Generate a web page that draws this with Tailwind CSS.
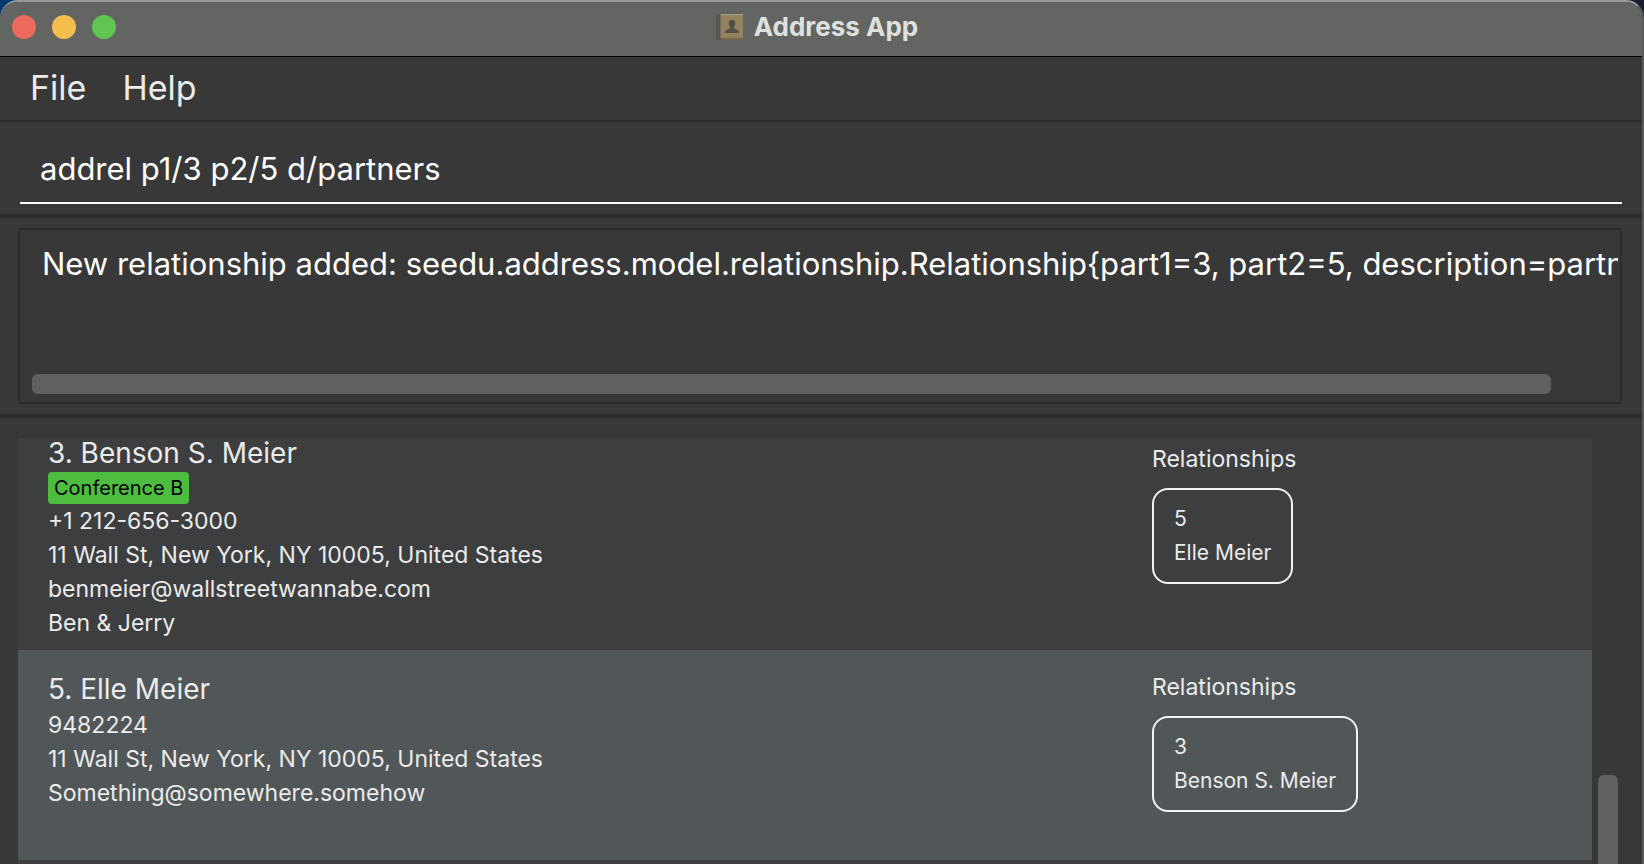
<!DOCTYPE html>
<html lang="en">
<head>
<meta charset="utf-8">
<meta name="viewport" content="width=device-width, initial-scale=1">
<title>Address App</title>
<script src="https://cdn.jsdelivr.net/npm/@tailwindcss/browser@4"></script>
</head>
<body class="h-screen overflow-hidden bg-linear-to-r from-[#003a70] to-[#171c2e] font-['Inter','Liberation_Sans',sans-serif]">
<div class="flex h-full flex-col overflow-hidden rounded-t-[18px] border-t-2 border-r-2 border-t-[#979a98] border-r-[#5a5a5a] bg-[#383838] text-[#ebebeb]">

  <!-- Title bar -->
  <header class="grid h-[55px] shrink-0 grid-cols-[1fr_auto_1fr] items-center border-b border-black bg-[#636563] px-3 pb-1">
    <div class="flex gap-4">
      <button type="button" aria-label="Close" class="size-6 rounded-full bg-[#ed6a5e]"></button>
      <button type="button" aria-label="Minimize" class="size-6 rounded-full bg-[#f5bf4f]"></button>
      <button type="button" aria-label="Zoom" class="size-6 rounded-full bg-[#61c554]"></button>
    </div>
    <div class="flex items-center gap-2.5 pr-2">
      <svg class="size-7" viewBox="0 0 28 28" aria-hidden="true">
        <rect x="0" y="1" width="6" height="26" rx="1.5" fill="#5b564d"/>
        <rect x="4" y="1" width="1" height="25" fill="#736c60"/>
        <rect x="5" y="1" width="22" height="25" rx="1" fill="#93835f"/>
        <rect x="5" y="1" width="22" height="1.2" fill="#a59c86"/>
        <rect x="5" y="24.8" width="22" height="1.4" fill="#7a6947"/>
        <path d="M16 6.800c2 0 3.300 1.400 3.300 3.600 0 1.600-.6 2.800-1.400 3.600v1.300c1.800 1 5.100 1.400 5.100 4.600H9c0-3.200 3.300-3.600 5.100-4.600v-1.300c-.8-.8-1.400-2-1.400-3.600C12.700 8.200 14 6.800 16 6.800z" fill="#544f45"/>
      </svg>
      <h1 class="text-[26px] leading-8 font-bold text-[#dfe1df]">Address App</h1>
    </div>
  </header>

  <!-- Menu bar -->
  <nav class="flex h-[65px] shrink-0 items-center gap-9 border-b-2 border-[#2b2b2b] px-[30px] pb-0.5 text-[34px] leading-10">
    <button type="button">File</button>
    <button type="button">Help</button>
  </nav>

  <!-- Command box -->
  <div class="shrink-0 border-b-4 border-[#2b2b2b] pt-3 pr-5 pb-2.5 pl-5">
    <input type="text" aria-label="Command" value="addrel p1/3 p2/5 d/partners" class="block h-[70px] w-full border-b-2 border-white bg-transparent px-5 text-[31px] text-white outline-none">
  </div>

  <!-- Result display -->
  <div class="shrink-0 border-b-4 border-[#2b2b2b] py-2.5 pr-5 pl-[18px]">
    <div class="flex h-44 flex-col border-2 border-[#2b2b2b] pr-0.5 pb-2">
      <textarea readonly wrap="off" aria-label="Result" class="block min-h-0 w-full flex-1 resize-none overflow-hidden bg-transparent pt-3.5 pl-[22px] text-[31px] leading-10 text-white outline-none">New relationship added: seedu.address.model.relationship.Relationship{part1=3, part2=5, description=partners}</textarea>
      <div class="pr-[67px] pl-3"><div class="h-5 rounded-md bg-[#606060]"></div></div>
    </div>
  </div>

  <!-- Person list -->
  <main class="flex min-h-0 flex-1 pt-5 pr-6 pl-[18px]">
    <ul class="min-w-0 flex-1 overflow-hidden bg-[#3c3e3f] text-[23px] leading-[34px]">
      <li class="-mt-5 grid grid-cols-[1fr_440px] bg-[#3c3e3f] pt-5 pb-2.5">
        <div class="pl-[30px]">
          <h2 class="mb-1 text-[28px] leading-[30px]">3. Benson S. Meier</h2>
          <div class="flex"><span class="h-8 rounded-sm bg-[#4dbd40] px-1.5 text-xl leading-8 text-black">Conference B</span></div>
          <p>+1 212-656-3000</p>
          <p>11 Wall St, New York, NY 10005, United States</p>
          <p>benmeier@wallstreetwannabe.com</p>
          <p>Ben &amp; Jerry</p>
        </div>
        <div class="flex flex-col items-start gap-3 pt-1">
          <h3>Relationships</h3>
          <div class="h-24 rounded-2xl border-2 border-[#f2f2f2] px-5 pt-3 text-[21px]">
            <p>5</p>
            <p>Elle Meier</p>
          </div>
        </div>
      </li>
      <li class="grid min-h-[210px] grid-cols-[1fr_440px] bg-[#515658] pt-5 pb-2.5">
        <div class="pt-1 pl-[30px]">
          <h2 class="mb-1 text-[28px] leading-[30px]">5. Elle Meier</h2>
          <p>9482224</p>
          <p>11 Wall St, New York, NY 10005, United States</p>
          <p>Something@somewhere.somehow</p>
        </div>
        <div class="flex flex-col items-start gap-3">
          <h3>Relationships</h3>
          <div class="h-24 rounded-2xl border-2 border-[#f2f2f2] px-5 pt-3 text-[21px]">
            <p>3</p>
            <p>Benson S. Meier</p>
          </div>
        </div>
      </li>
    </ul>
    <div class="flex w-[26px] flex-col justify-end pl-1.5">
      <div class="h-[89px] rounded-t-md bg-[#606060]"></div>
    </div>
  </main>
</div>
</body>
</html>
